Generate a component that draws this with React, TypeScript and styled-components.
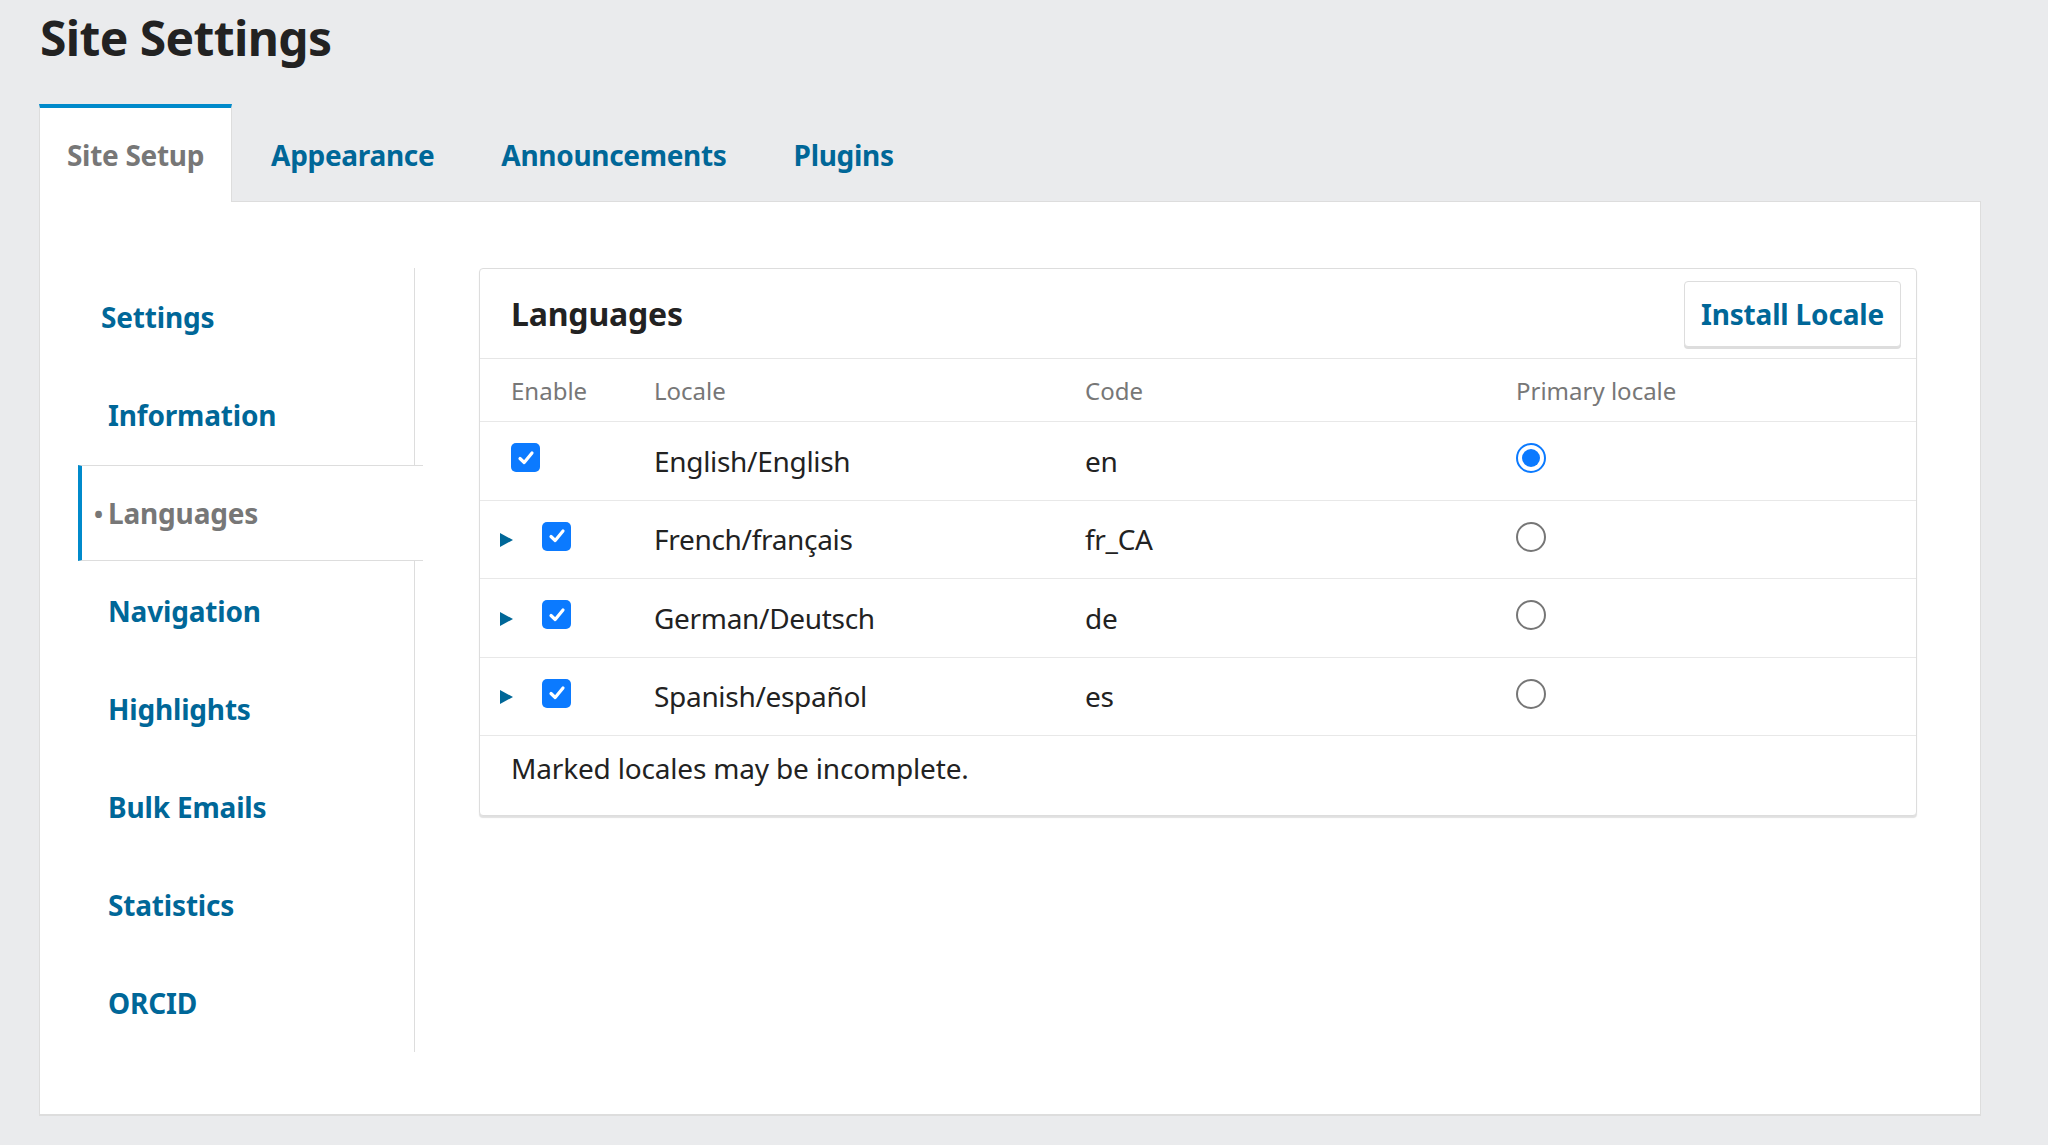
import React from "react";
import styled, { createGlobalStyle } from "styled-components";

const GlobalStyle = createGlobalStyle`
  html, body {
    margin: 0;
    padding: 0;
    background: #eaebed;
    font-family: "Noto Sans", "Open Sans", sans-serif;
    color: #222;
    letter-spacing: -0.011em;
  }
  * { box-sizing: border-box; }
`;

const Page = styled.div`
  padding: 0 67px 32px 39px;
`;

const Title = styled.h1`
  margin: 9px 0 0 1px;
  font-size: 48px;
  line-height: 58px;
  font-weight: 700;
  color: #222;
  letter-spacing: -0.013em;
`;

const TabBar = styled.div`
  display: flex;
  gap: 11px;
  margin-top: 37px;
`;

const Tab = styled.button<{ $active?: boolean }>`
  position: relative;
  z-index: 1;
  height: 98px;
  margin-bottom: -1px;
  padding: 0 27px;
  font-family: inherit;
  font-size: 28px;
  font-weight: 700;
  letter-spacing: -0.011em;
  background: ${(p) => (p.$active ? "#fff" : "transparent")};
  color: ${(p) => (p.$active ? "#777" : "#006798")};
  border: none;
  border-top: 4px solid ${(p) => (p.$active ? "#008acb" : "transparent")};
  border-left: 1px solid ${(p) => (p.$active ? "#ddd" : "transparent")};
  border-right: 1px solid ${(p) => (p.$active ? "#ddd" : "transparent")};
  cursor: pointer;
`;

const Panel = styled.div`
  display: grid;
  grid-template-columns: 337px 1fr;
  column-gap: 64px;
  align-items: start;
  background: #fff;
  border: 1px solid #ddd;
  box-shadow: 0 1px 0 #ddd;
  padding: 66px 63px 62px 38px;
`;

const SideNav = styled.ul`
  list-style: none;
  margin: 0;
  padding: 0;
  border-right: 1px solid #ddd;
`;

const NavItem = styled.li<{ $active?: boolean; $indent?: number }>`
  display: flex;
  align-items: center;
  height: ${(p) => (p.$active ? "96px" : "98px")};
  margin: ${(p) => (p.$active ? "1px -9px 1px 0" : "0")};
  padding-left: ${(p) => (p.$active ? 12 : p.$indent ?? 30)}px;
  font-size: 28px;
  font-weight: 700;
  color: ${(p) => (p.$active ? "#777" : "#006798")};
  background: #fff;
  border-left: ${(p) => (p.$active ? "4px solid #008acb" : "none")};
  border-top: ${(p) => (p.$active ? "1px solid #ddd" : "none")};
  border-bottom: ${(p) => (p.$active ? "1px solid #ddd" : "none")};
  position: relative;
  z-index: ${(p) => (p.$active ? 1 : 0)};
`;

const Bullet = styled.span`
  display: inline-block;
  width: 14px;
  font-size: 24px;
`;

const Card = styled.section`
  background: #fff;
  border: 1px solid #ddd;
  border-radius: 4px;
  box-shadow: 0 2px 1px rgba(0, 0, 0, 0.12);
`;

const CardHeader = styled.div`
  display: flex;
  align-items: center;
  justify-content: space-between;
  height: 90px;
  padding: 0 15px 0 31px;
  border-bottom: 1px solid #e6e6e6;
`;

const CardTitle = styled.h2`
  margin: 0;
  font-size: 32px;
  font-weight: 700;
  color: #222;
`;

const Button = styled.button`
  height: 66px;
  padding: 0 16px;
  font-family: inherit;
  font-size: 28px;
  font-weight: 700;
  letter-spacing: inherit;
  color: #006798;
  background: #fff;
  border: 1px solid #ddd;
  border-radius: 4px;
  box-shadow: 0 2px 0 #ddd;
  cursor: pointer;
`;

const Row = styled.div<{ $head?: boolean }>`
  display: grid;
  grid-template-columns: 174px 431px 431px 1fr;
  align-items: center;
  height: ${(p) => (p.$head ? "63px" : "78.5px")};
  border-bottom: 1px solid #e8e8e8;
  font-size: ${(p) => (p.$head ? "24px" : "28px")};
  letter-spacing: ${(p) => (p.$head ? "0" : "-0.011em")};
  color: ${(p) => (p.$head ? "#777" : "#222")};
`;

const FirstCell = styled.div`
  display: flex;
  align-items: center;
  padding-left: 31px;
`;

const Cell = styled.div`
  display: flex;
  align-items: center;
`;

const Toggle = styled.span`
  width: 0;
  height: 0;
  margin-left: -11px;
  margin-right: 29px;
  margin-bottom: -2px;
  border-left: 13px solid #006798;
  border-top: 7.5px solid transparent;
  border-bottom: 7.5px solid transparent;
`;

const CheckBox = styled.span`
  display: inline-flex;
  align-items: center;
  justify-content: center;
  width: 29px;
  height: 29px;
  margin-bottom: 6px;
  border-radius: 5px;
  background: #0b7aff;
`;

const Radio = styled.span<{ $checked?: boolean }>`
  display: inline-flex;
  align-items: center;
  justify-content: center;
  width: 30px;
  height: 30px;
  margin-bottom: 5px;
  border-radius: 50%;
  border: 2px solid ${(p) => (p.$checked ? "#0b7aff" : "#767676")};
  background: #fff;
  &::after {
    content: "";
    display: ${(p) => (p.$checked ? "block" : "none")};
    width: 18px;
    height: 18px;
    border-radius: 50%;
    background: #0b7aff;
  }
`;

const Footer = styled.p`
  margin: 0;
  padding: 11px 31px 26px;
  font-size: 28px;
  line-height: 42px;
  color: #222;
`;

const Check = () => (
  <svg width="20" height="20" viewBox="0 0 20 20" aria-hidden>
    <path d="M4 10.5 L8.2 14.5 L16 5" fill="none" stroke="#fff" strokeWidth="3.2" strokeLinecap="round" strokeLinejoin="round" />
  </svg>
);

const navItems = [
  { label: "Settings", indent: 23 },
  { label: "Information" },
  { label: "Languages", active: true },
  { label: "Navigation" },
  { label: "Highlights" },
  { label: "Bulk Emails" },
  { label: "Statistics" },
  { label: "ORCID" },
];

const locales = [
  { name: "English/English", code: "en", primary: true, expandable: false },
  { name: "French/français", code: "fr_CA", primary: false, expandable: true },
  { name: "German/Deutsch", code: "de", primary: false, expandable: true },
  { name: "Spanish/español", code: "es", primary: false, expandable: true },
];

export default function App() {
  return (
    <>
      <GlobalStyle />
      <Page>
        <Title>Site Settings</Title>
        <TabBar>
          <Tab $active>Site Setup</Tab>
          <Tab>Appearance</Tab>
          <Tab>Announcements</Tab>
          <Tab>Plugins</Tab>
        </TabBar>
        <Panel>
          <SideNav>
            {navItems.map((n) => (
              <NavItem key={n.label} $active={n.active} $indent={n.indent}>
                {n.active && <Bullet>•</Bullet>}
                {n.label}
              </NavItem>
            ))}
          </SideNav>
          <Card>
            <CardHeader>
              <CardTitle>Languages</CardTitle>
              <Button>Install Locale</Button>
            </CardHeader>
            <Row $head>
              <FirstCell>Enable</FirstCell>
              <Cell>Locale</Cell>
              <Cell>Code</Cell>
              <Cell>Primary locale</Cell>
            </Row>
            {locales.map((l) => (
              <Row key={l.code}>
                <FirstCell>
                  {l.expandable && <Toggle />}
                  <CheckBox>
                    <Check />
                  </CheckBox>
                </FirstCell>
                <Cell>{l.name}</Cell>
                <Cell>{l.code}</Cell>
                <Cell>
                  <Radio $checked={l.primary} />
                </Cell>
              </Row>
            ))}
            <Footer>Marked locales may be incomplete.</Footer>
          </Card>
        </Panel>
      </Page>
    </>
  );
}
